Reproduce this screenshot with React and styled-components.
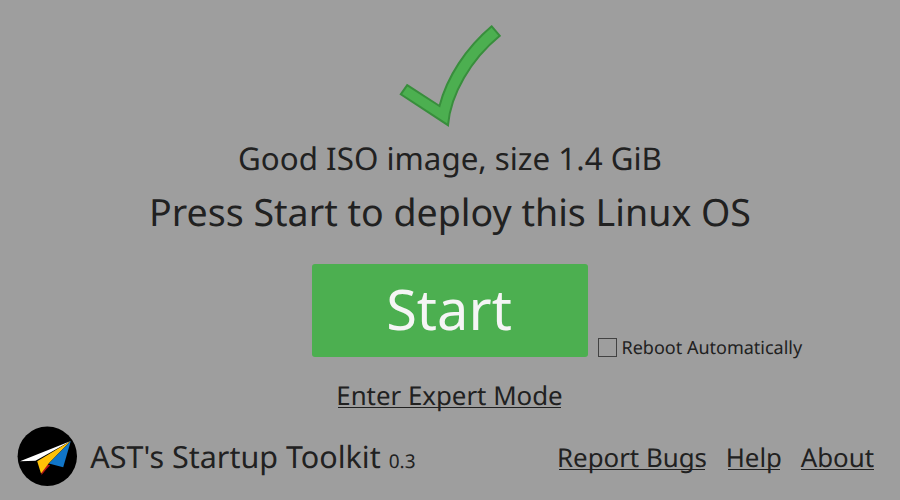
import React from "react";
import styled, { createGlobalStyle } from "styled-components";

const GlobalStyle = createGlobalStyle`
  * { box-sizing: border-box; }
  body {
    margin: 0;
    background: #9e9e9e;
    color: #212121;
    font-family: "Noto Sans", sans-serif;
    text-rendering: geometricPrecision;
  }
`;

const Window = styled.main`
  width: 900px;
  height: 500px;
  display: flex;
  flex-direction: column;
  align-items: center;
  overflow: hidden;
  background: #9e9e9e;
`;

const StatusIcon = styled.svg`
  width: 120px;
  height: 120px;
  margin-top: 15px;
  flex: none;
`;

const Message = styled.p`
  margin: ${(p) => p.$top}px 0 0;
  font-size: ${(p) => p.$size}px;
  line-height: ${(p) => p.$line}px;
  white-space: nowrap;
`;

const ActionRow = styled.section`
  width: 100%;
  height: 93px;
  margin-top: 25px;
  display: grid;
  grid-template-columns: 1fr 276px 1fr;
  align-items: end;
  flex: none;
`;

const StartButton = styled.button`
  grid-column: 2;
  height: 93px;
  padding: 0 2px 2px 0;
  border: 0;
  border-radius: 3px;
  background: #4caf50;
  color: #f5f5f5;
  font: 56px/91px "Noto Sans", sans-serif;
  text-rendering: geometricPrecision;
`;

const CheckOption = styled.label`
  display: flex;
  align-items: center;
  gap: 4.5px;
  margin-left: 10px;
  height: 19px;
  font-size: 18px;
  line-height: 21px;
  white-space: nowrap;
`;

const CheckLabel = styled.span`
  padding-top: 2px;
`;

const CheckBox = styled.input`
  appearance: none;
  width: 19px;
  height: 19px;
  margin: 0;
  border: 1px solid #424242;
`;

const TextLink = styled.a`
  display: block;
  height: 36px;
  font-size: 25.85px;
  line-height: 36px;
  white-space: nowrap;
  background: linear-gradient(#212121, #212121) no-repeat
    ${(p) => p.$inset ?? 2}px 30px / calc(100% - ${(p) => (p.$inset ?? 2) * 2}px) 1px;
`;

const ExpertArea = styled.div`
  margin-top: 20px;
  padding-right: 1px;
`;

const Footer = styled.footer`
  width: 100%;
  height: 60px;
  margin-top: 13px;
  padding: 0 26px 0 17px;
  display: flex;
  align-items: center;
`;

const Logo = styled.svg`
  width: 60px;
  height: 60px;
  flex: none;
`;

const Brand = styled.div`
  margin: 4px 0 0 13.3px;
  font-size: 30.5px;
  line-height: 44px;
  white-space: nowrap;
`;

const Version = styled.span`
  margin-left: 8px;
  font-size: 19px;
`;

const Links = styled.nav`
  display: flex;
  gap: 18.7px;
  margin: 2px 0 0 auto;
`;

export default function App() {
  return (
    <>
      <GlobalStyle />
      <Window>
        <StatusIcon viewBox="0 0 120 120">
          <path
            d="M17.2 70.2 L49.5 91 C57 62 76 33 101.7 11.3 L109.8 20.8 C81 44.5 60.5 79 58 110.2 L10.8 79.3 Z"
            fill="#4caf50"
            stroke="#388e3c"
            strokeWidth="2"
          />
        </StatusIcon>
        <Message $top={2} $size={31.3} $line={44}>Good ISO image, size 1.4 GiB</Message>
        <Message $top={6} $size={37.55} $line={52}>Press Start to deploy this Linux OS</Message>
        <ActionRow>
          <StartButton>Start</StartButton>
          <CheckOption>
            <CheckBox type="checkbox" />
            <CheckLabel>Reboot Automatically</CheckLabel>
          </CheckOption>
        </ActionRow>
        <ExpertArea>
          <TextLink>Enter Expert Mode</TextLink>
        </ExpertArea>
        <Footer>
          <Logo viewBox="17 426 60 60">
            <circle cx="47.3" cy="456.2" r="29.7" fill="#000" />
            <path d="M70.8 441 L20 461.2 L35.5 460.8 Z" fill="#fff" />
            <path d="M47.5 464.5 L50.2 465.3 L46.5 469 L41.5 475 L41.5 471 Z" fill="#b51217" />
            <path d="M70.8 441 L37.2 461.3 L41 473.5 L48.6 463.5 Z" fill="#ffc107" />
            <path d="M70.8 441 L48.8 463.4 L63.2 467.2 Z" fill="#1075c8" />
          </Logo>
          <Brand>
            AST's Startup Toolkit<Version>0.3</Version>
          </Brand>
          <Links>
            <TextLink>Report Bugs</TextLink>
            <TextLink>Help</TextLink>
            <TextLink $inset={0}>About</TextLink>
          </Links>
        </Footer>
      </Window>
    </>
  );
}
